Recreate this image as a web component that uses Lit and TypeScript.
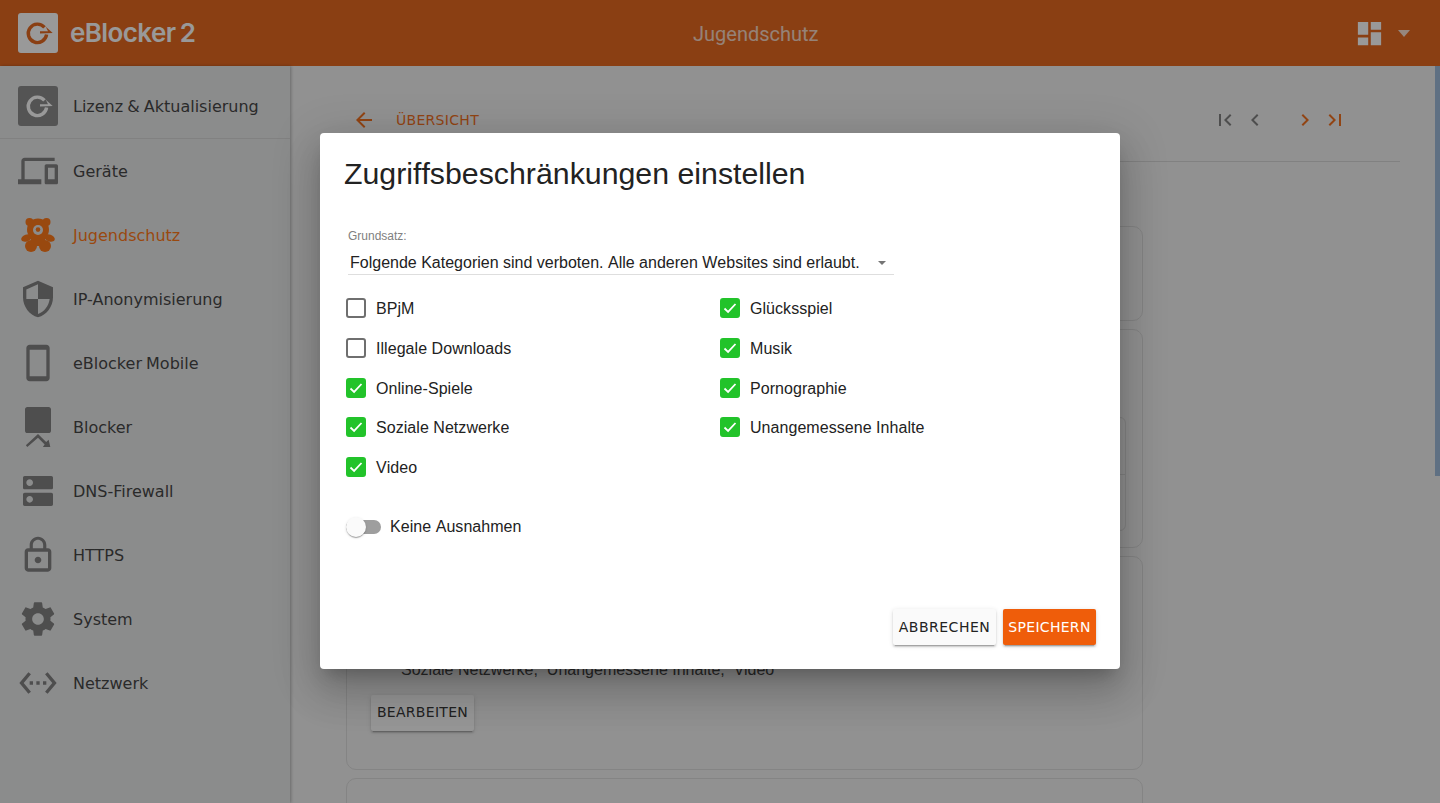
import { LitElement, css, html, svg } from "lit";
import { customElement } from "lit/decorators.js";

const ICONS: Record<string, string> = {
  devices:
    "M4 6h18V4H4c-1.1 0-2 .9-2 2v11H0v3h14v-3H4V6zm19 2h-6c-.55 0-1 .45-1 1v10c0 .55.45 1 1 1h6c.55 0 1-.45 1-1V9c0-.55-.45-1-1-1zm-1 9h-4v-7h4v7z",
  security:
    "M12 1L3 5v6c0 5.55 3.84 10.74 9 12 5.16-1.26 9-6.45 9-12V5l-9-4zm0 10.99h7c-.53 4.12-3.28 7.79-7 8.94V12H5V6.3l7-3.11v8.8z",
  phone:
    "M17 1.01L7 1c-1.1 0-2 .9-2 2v18c0 1.1.9 2 2 2h10c1.1 0 2-.9 2-2V3c0-1.1-.9-1.99-2-1.99zM17 20H7V4h10v16z",
  dns: "M20 13H4c-.55 0-1 .45-1 1v6c0 .55.45 1 1 1h16c.55 0 1-.45 1-1v-6c0-.55-.45-1-1-1zM7 19c-1.1 0-2-.9-2-2s.9-2 2-2 2 .9 2 2-.9 2-2 2zM20 3H4c-.55 0-1 .45-1 1v6c0 .55.45 1 1 1h16c.55 0 1-.45 1-1V4c0-.55-.45-1-1-1zM7 9c-1.1 0-2-.9-2-2s.9-2 2-2 2 .9 2 2-.9 2-2 2z",
  lock: "M12 17c1.1 0 2-.9 2-2s-.9-2-2-2-2 .9-2 2 .9 2 2 2zm6-9h-1V6c0-2.76-2.24-5-5-5S7 3.24 7 6v2H6c-1.1 0-2 .9-2 2v10c0 1.1.9 2 2 2h12c1.1 0 2-.9 2-2V10c0-1.1-.9-2-2-2zM8.9 6c0-1.71 1.39-3.1 3.1-3.1s3.1 1.39 3.1 3.1v2H8.9V6zM18 20H6V10h12v10z",
  gear: "M19.43 12.98c.04-.32.07-.64.07-.98s-.03-.66-.07-.98l2.11-1.65c.19-.15.24-.42.12-.64l-2-3.46c-.12-.22-.39-.3-.61-.22l-2.49 1c-.52-.4-1.08-.73-1.69-.98l-.38-2.65C14.46 2.18 14.25 2 14 2h-4c-.25 0-.46.18-.49.42l-.38 2.65c-.61.25-1.17.59-1.69.98l-2.49-1c-.23-.09-.49 0-.61.22l-2 3.46c-.13.22-.07.49.12.64l2.11 1.65c-.04.32-.07.65-.07.98s.03.66.07.98l-2.11 1.65c-.19.15-.24.42-.12.64l2 3.46c.12.22.39.3.61.22l2.49-1c.52.4 1.08.73 1.69.98l.38 2.65c.03.24.24.42.49.42h4c.25 0 .46-.18.49-.42l.38-2.65c.61-.25 1.17-.59 1.69-.98l2.49 1c.23.09.49 0 .61-.22l2-3.46c.12-.22.07-.49-.12-.64l-2.11-1.65zM12 15.5c-1.93 0-3.5-1.57-3.5-3.5s1.57-3.5 3.5-3.5 3.5 1.57 3.5 3.5-1.57 3.5-3.5 3.5z",
  network:
    "M7.77 6.76L6.23 5.48.82 12l5.41 6.52 1.54-1.28L3.42 12l4.35-5.24zM7 13h2v-2H7v2zm10-2h-2v2h2v-2zm-6 2h2v-2h-2v2zm6.77-7.52l-1.54 1.28L20.58 12l-4.35 5.24 1.54 1.28L23.18 12l-5.41-6.52z",
  blocker:
    "M5.6 0h12.8c.8 0 1.4.6 1.4 1.4v12.8c0 .8-.6 1.4-1.4 1.4H5.6c-.8 0-1.4-.6-1.4-1.4V1.4C4.2.6 4.8 0 5.6 0zM5.6 24l-.9-1L12 16.2l4.9 4.8 1.5-1.4 1 4.4h-4.5l1.1-1.5-4-4.1z",
  dashboard: "M3 13h8V3H3v10zm0 8h8v-6H3v6zm10 0h8V11h-8v10zm0-18v6h8V3h-8z",
  first: "M18.41 16.59L13.82 12l4.59-4.59L17 6l-6 6 6 6zM6 6h2v12H6z",
  prev: "M15.41 7.41L14 6l-6 6 6 6 1.41-1.41L10.83 12z",
  next: "M10 6L8.59 7.41 13.17 12l-4.58 4.59L10 18l6-6z",
  last: "M5.59 7.41L10.18 12l-4.59 4.59L7 18l6-6-6-6zM16 6h2v12h-2z",
  back: "M20 11H7.83l5.59-5.59L12 4l-8 8 8 8 1.41-1.41L7.83 13H20v-2z",
};

const NAV = [
  { label: "Geräte", icon: "devices" },
  { label: "Jugendschutz", icon: "teddy", active: true },
  { label: "IP-Anonymisierung", icon: "security" },
  { label: "eBlocker Mobile", icon: "phone" },
  { label: "Blocker", icon: "blocker" },
  { label: "DNS-Firewall", icon: "dns" },
  { label: "HTTPS", icon: "lock" },
  { label: "System", icon: "gear" },
  { label: "Netzwerk", icon: "network" },
];

const LEFT = [
  { label: "BPjM", on: false },
  { label: "Illegale Downloads", on: false },
  { label: "Online-Spiele", on: true },
  { label: "Soziale Netzwerke", on: true },
  { label: "Video", on: true },
];

const RIGHT = [
  { label: "Glücksspiel", on: true },
  { label: "Musik", on: true },
  { label: "Pornographie", on: true },
  { label: "Unangemessene Inhalte", on: true },
];

const icon = (name: string, size = 40) => html`<svg
  width=${size}
  height=${size}
  viewBox="0 0 24 24"
  fill="currentColor"
>
  ${svg`<path d=${ICONS[name]}></path>`}
</svg>`;

const teddy = html`<svg width="40" height="40" viewBox="0 0 40 40" fill="currentColor">
  <circle cx="11.5" cy="7" r="4"></circle>
  <circle cx="28.5" cy="7" r="4"></circle>
  <circle cx="20" cy="14.5" r="11"></circle>
  <ellipse cx="8.5" cy="23" rx="5.5" ry="3.4" transform="rotate(-20 8.5 23)"></ellipse>
  <ellipse cx="31.5" cy="23" rx="5.5" ry="3.4" transform="rotate(20 31.5 23)"></ellipse>
  <path d="M13 22h14v9H13z"></path>
  <circle cx="13" cy="31" r="6"></circle>
  <circle cx="27" cy="31" r="6"></circle>
  <circle cx="20" cy="15" r="5" fill="#e6e7e8"></circle>
  <circle cx="20" cy="14.6" r="2.3"></circle>
</svg>`;

// round arrow of the eBlocker logo, ring colour comes from the caller
const logoMark = html`<svg width="40" height="40" viewBox="0 0 40 40" fill="none">
  <path
    d="M26.5 14.4A9.2 9.2 0 1 0 28.6 21.6"
    stroke="currentColor"
    stroke-width="3.4"
  ></path>
  <path d="M22 18.2h8l-2.2-4.4 6.9 6.2-12.7.6z" fill="currentColor"></path>
</svg>`;

@customElement("app-root")
export class AppRoot extends LitElement {
  static styles = css`
    :host {
      display: block;
      position: relative;
      height: 803px;
      overflow: hidden;
      background: #f0f0f0;
      color: #333;
      font-family: "DejaVu Sans", sans-serif;
    }

    svg {
      display: block;
    }

    .toolbar {
      height: 66px;
      display: flex;
      align-items: center;
      background: #e45909;
      color: #fff;
      padding: 0 30px 0 18px;
      position: relative;
    }

    .logo-box {
      width: 40px;
      height: 40px;
      border-radius: 3px;
      background: #fff;
      color: #e45909;
      flex: none;
    }

    .brand {
      margin-left: 12px;
      font: 600 26px/1 "Inter", sans-serif;
      letter-spacing: -0.6px;
      word-spacing: -1.5px;
      flex: 1;
    }

    .title {
      font: 20px/1 "Roboto", sans-serif;
      position: absolute;
      left: 693px;
      top: 24px;
      opacity: 0.75;
    }

    .dash {
      margin-right: 13px;
    }

    .caret {
      width: 0;
      height: 0;
      border-left: 6px solid transparent;
      border-right: 6px solid transparent;
      border-top: 7px solid #fff;
      opacity: 0.8;
    }

    .layout {
      display: flex;
      height: 737px;
    }

    .sidebar {
      width: 290px;
      flex: none;
      background: #e6e7e8;
      box-shadow: 1px 0 3px rgba(0, 0, 0, 0.3);
      position: relative;
    }

    .nav-top {
      height: 73px;
      box-sizing: border-box;
      display: flex;
      align-items: center;
      padding: 8px 0 0 18px;
      border-bottom: 1px solid #d2d2d2;
    }

    .nav-top .logo-box {
      background: #808080;
      color: #fff;
    }

    .nav-item {
      height: 64px;
      display: flex;
      align-items: center;
      padding-left: 18px;
    }

    .nav-item svg {
      color: #757575;
    }

    .nav-label {
      margin: 2px 0 0 15px;
      font-size: 16px;
      line-height: 20px;
      word-spacing: -1px;
    }

    .active,
    .nav-item.active svg {
      color: #ff6c00;
    }

    .main {
      flex: 1;
      padding: 0 40px 0 56px;
    }

    .main-head {
      height: 96px;
      box-sizing: border-box;
      display: flex;
      align-items: center;
      border-bottom: 1px solid #d2d2d2;
      padding-top: 13px;
      color: #f06208;
      font-size: 14px;
      letter-spacing: 0.3px;
    }

    .back {
      display: flex;
      align-items: center;
      gap: 20px;
      margin-left: 6px;
      flex: 1;
    }

    .pager {
      display: flex;
      margin-right: 50px;
    }

    .pager span {
      width: 30px;
      display: flex;
      justify-content: center;
    }

    .pager .off {
      color: #757575;
    }

    .pager .gap {
      margin-left: 20px;
    }

    .cards {
      width: 797px;
      padding-top: 64px;
      display: flex;
      flex-direction: column;
      gap: 8px;
    }

    .card {
      border: 1px solid #d8d8d8;
      border-radius: 10px;
      box-sizing: border-box;
      flex: none;
      display: flex;
      flex-direction: column;
    }

    .card-a {
      height: 95px;
    }

    .card-b {
      height: 219px;
      align-items: flex-end;
      padding: 87px 16px 0 0;
    }

    .inner {
      width: 700px;
      height: 114px;
      box-sizing: border-box;
      border: 1px solid #d8d8d8;
      border-radius: 6px;
    }

    .inner div {
      height: 56px;
      border-bottom: 1px solid #d8d8d8;
    }

    .card-c {
      height: 214px;
      justify-content: flex-end;
      padding: 0 0 38px 24px;
    }

    .card-c p {
      margin: 0 0 15px 30px;
      font: 16px/20px "Liberation Sans", sans-serif;
    }

    .card-d {
      height: 100px;
    }

    .btn {
      height: 36px;
      box-sizing: border-box;
      display: inline-flex;
      align-items: center;
      justify-content: center;
      background: #fafafa;
      border-radius: 2px;
      font-size: 14px;
      letter-spacing: 0.5px;
      box-shadow: 0 3px 1px -2px rgba(0, 0, 0, 0.2),
        0 2px 2px 0 rgba(0, 0, 0, 0.14), 0 1px 5px 0 rgba(0, 0, 0, 0.12);
      color: #222;
    }

    .card-c .btn {
      width: 103px;
      padding-bottom: 2px;
      letter-spacing: 0.3px;
    }

    .scroll {
      position: absolute;
      right: 0;
      top: 66px;
      width: 5px;
      height: 410px;
      background: #94b4d7;
    }

    .backdrop {
      position: absolute;
      inset: 0;
      background: rgba(33, 33, 33, 0.46);
      display: flex;
      align-items: center;
      justify-content: center;
    }

    .dialog {
      width: 800px;
      height: 536px;
      margin-top: -1px;
      box-sizing: border-box;
      background: #fff;
      border-radius: 4px;
      padding: 24px;
      display: flex;
      flex-direction: column;
      font-family: "Liberation Sans", sans-serif;
      font-kerning: none;
      color: #222;
      box-shadow: 0 11px 15px -7px rgba(0, 0, 0, 0.2),
        0 24px 38px 3px rgba(0, 0, 0, 0.14),
        0 9px 46px 8px rgba(0, 0, 0, 0.12);
    }

    h2 {
      margin: 0;
      font-size: 30.3px;
      font-weight: 400;
      line-height: 34px;
    }

    .select {
      margin: 38px 0 0 4px;
      width: 546px;
      border-bottom: 1px solid #dedede;
    }

    .select label {
      display: block;
      font-size: 12px;
      line-height: 14px;
      color: #808080;
    }

    .select-row {
      display: flex;
      align-items: center;
      justify-content: space-between;
      height: 23px;
      padding: 0 8px 0 2px;
      margin-top: 8px;
      font-size: 16px;
    }

    .select-caret {
      border-left: 4px solid transparent;
      border-right: 4px solid transparent;
      border-top: 4px solid #757575;
    }

    .checks {
      display: grid;
      grid-template-columns: 374px 1fr;
      margin: 23px 0 0 2px;
    }

    .col {
      display: flex;
      flex-direction: column;
      gap: 19.75px;
    }

    .check {
      display: flex;
      align-items: center;
      gap: 10px;
      height: 20px;
      font-size: 16px;
      letter-spacing: 0.05px;
    }

    .check-label {
      margin-top: 2px;
    }

    .box {
      width: 20px;
      height: 20px;
      box-sizing: border-box;
      border: 2px solid #6f6f6f;
      border-radius: 3px;
      display: flex;
      align-items: center;
      justify-content: center;
    }

    .box.on {
      background: #22c32a;
      border-color: #22c32a;
    }

    .toggle {
      display: flex;
      align-items: center;
      margin: 40px 0 0 2px;
      font-size: 16px;
      letter-spacing: 0.05px;
      height: 20px;
    }

    .track {
      width: 35px;
      height: 14px;
      border-radius: 7px;
      background: #9e9e9e;
      position: relative;
      margin-right: 9px;
    }

    .thumb {
      position: absolute;
      left: 0;
      top: -3px;
      width: 20px;
      height: 20px;
      border-radius: 50%;
      background: #fafafa;
      box-shadow: 0 2px 1px -1px rgba(0, 0, 0, 0.2),
        0 1px 1px 0 rgba(0, 0, 0, 0.14), 0 1px 3px 0 rgba(0, 0, 0, 0.12);
    }

    .actions {
      margin-top: auto;
      display: flex;
      justify-content: flex-end;
      gap: 7px;
      font-family: "DejaVu Sans", sans-serif;
    }

    .actions .btn {
      width: 103px;
    }

    .actions .save {
      width: 93px;
      background: #ef5d0a;
      color: #fff;
      letter-spacing: 0.3px;
    }
  `;

  render() {
    return html`
      <div class="toolbar">
        <div class="logo-box">${logoMark}</div>
        <div class="brand">eBlocker 2</div>
        <div class="title">Jugendschutz</div>
        <div class="dash">${icon("dashboard", 31)}</div>
        <div class="caret"></div>
      </div>
      <div class="layout">
        <div class="sidebar">
          <div class="nav-top">
            <div class="logo-box">${logoMark}</div>
            <span class="nav-label">Lizenz &amp; Aktualisierung</span>
          </div>
          ${NAV.map(
            (item) => html`<div class="nav-item ${item.active ? "active" : ""}">
              ${item.icon === "teddy" ? teddy : icon(item.icon)}
              <span class="nav-label">${item.label}</span>
            </div>`
          )}
        </div>
        <div class="main">
          <div class="main-head">
            <div class="back">${icon("back", 24)}<span>ÜBERSICHT</span></div>
            <div class="pager">
              <span class="off">${icon("first", 24)}</span>
              <span class="off">${icon("prev", 24)}</span>
              <span class="gap">${icon("next", 24)}</span>
              <span>${icon("last", 24)}</span>
            </div>
          </div>
          <div class="cards">
            <div class="card card-a"></div>
            <div class="card card-b">
              <div class="inner"><div></div></div>
            </div>
            <div class="card card-c">
              <p>Soziale Netzwerke,&nbsp; Unangemessene Inhalte,&nbsp; Video</p>
              <div><span class="btn">BEARBEITEN</span></div>
            </div>
            <div class="card card-d"></div>
          </div>
        </div>
      </div>
      <div class="scroll"></div>
      <div class="backdrop">
        <div class="dialog">
          <h2>Zugriffsbeschränkungen einstellen</h2>
          <div class="select">
            <label>Grundsatz:</label>
            <div class="select-row">
              <span>Folgende Kategorien sind verboten. Alle anderen Websites sind erlaubt.</span>
              <span class="select-caret"></span>
            </div>
          </div>
          <div class="checks">
            <div class="col">${LEFT.map((c) => this.renderCheck(c))}</div>
            <div class="col">${RIGHT.map((c) => this.renderCheck(c))}</div>
          </div>
          <div class="toggle">
            <div class="track"><div class="thumb"></div></div>
            Keine Ausnahmen
          </div>
          <div class="actions">
            <span class="btn">ABBRECHEN</span>
            <span class="btn save">SPEICHERN</span>
          </div>
        </div>
      </div>
    `;
  }

  renderCheck(c: { label: string; on: boolean }) {
    return html`<div class="check">
      <span class="box ${c.on ? "on" : ""}">
        ${c.on
          ? html`<svg width="14" height="12" viewBox="0 0 14 12" fill="none">
              <path d="M1.5 6.5l3.6 3.4L12.5 2" stroke="#fff" stroke-width="1.8"></path>
            </svg>`
          : ""}
      </span>
      <span class="check-label">${c.label}</span>
    </div>`;
  }
}
